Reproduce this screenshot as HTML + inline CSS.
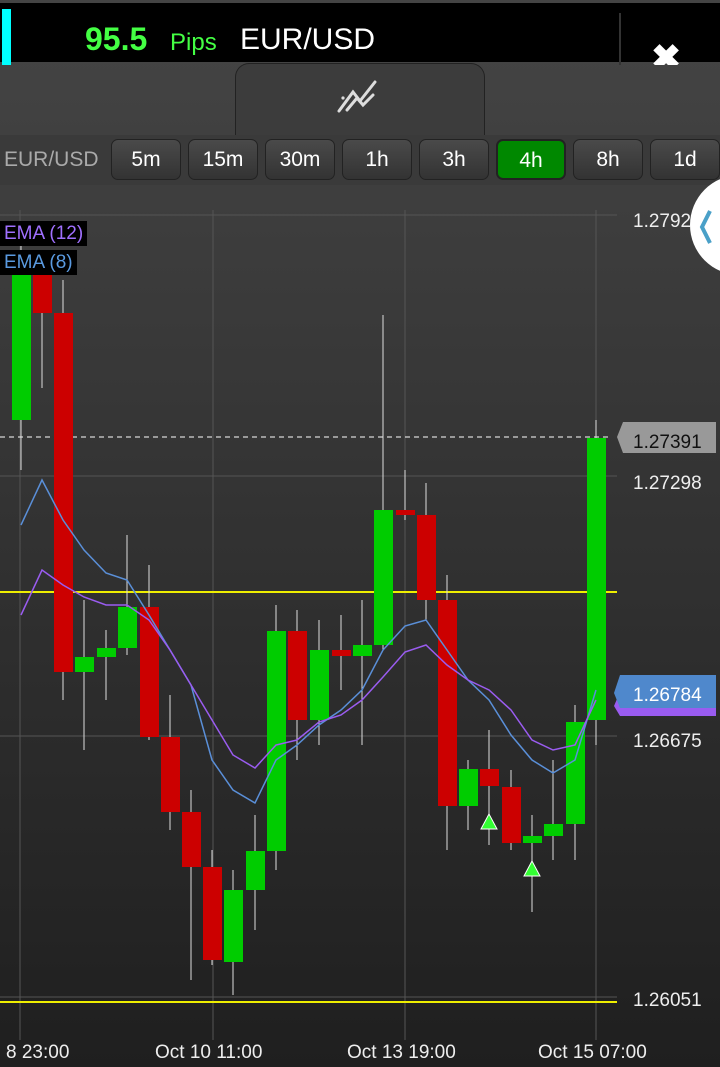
<!DOCTYPE html>
<html><head><meta charset="utf-8"><style>
body{margin:0;width:720px;height:1067px;overflow:hidden;background:linear-gradient(#454545,#1f1f1f);font-family:"Liberation Sans",sans-serif;position:relative}
.top{position:absolute;left:0;top:0;width:720px;height:62px;background:#000;border-top:3px solid #444;box-sizing:border-box}
.cy{position:absolute;left:2px;top:6px;width:9px;height:56px;background:#0ff}
.t1{position:absolute;left:85px;top:18px;font-size:32px;color:#4f4;font-weight:bold}
.t2{position:absolute;left:170px;top:26px;font-size:24px;color:#4f4}
.t3{position:absolute;left:240px;top:20px;font-size:30px;color:#fff}
.sep{position:absolute;left:619px;top:10px;width:2px;height:52px;background:#333}
.x{position:absolute;left:651px;top:34px;font-size:36px;color:#fff;font-weight:bold;height:28px;overflow:hidden}
.tab{position:absolute;left:235px;top:63px;width:250px;height:72px;background:#3c3c3c;border:1px solid #222;border-bottom:none;border-radius:14px 14px 0 0;box-sizing:border-box}
.row{position:absolute;left:0;top:135px;width:720px;height:50px;background:#3a3a3a}
.lbl{position:absolute;left:4px;top:148px;font-size:21px;color:#aaa}
.b{position:absolute;top:139px;width:70px;height:41px;background:linear-gradient(#4a4a4a,#333);border:1px solid #222;border-radius:7px;box-sizing:border-box;color:#fff;font-size:21px;text-align:center;line-height:40px}
.b.on{background:#080;border:2px solid #222}
.ema{position:absolute;left:0;background:#000;font-size:19px;padding:0 4px;height:25px;line-height:25px}
.circ{position:absolute;left:690px;top:175px;width:100px;height:100px;border-radius:50%;background:#fff}
</style></head><body>
<div class="top"><div class="cy"></div><div class="t1">95.5</div><div class="t2">Pips</div><div class="t3">EUR/USD</div><div class="sep"></div><div class="x">✖</div></div>
<div class="row"></div>
<div class="tab"><svg width="250" height="72" style="position:absolute;left:-1px;top:0"><path d="M104 47 L118 28 L125 37 L140 18 M112 46 L122 34 L128 41 L138 31" stroke="#ddd" stroke-width="3" fill="none" stroke-linecap="round"/><circle cx="108" cy="34" r="1.6" fill="#ddd"/></svg></div>
<div class="lbl">EUR/USD</div>
<div class="b" style="left:111px">5m</div><div class="b" style="left:188px">15m</div><div class="b" style="left:265px">30m</div><div class="b" style="left:342px">1h</div><div class="b" style="left:419px">3h</div><div class="b on" style="left:496px">4h</div><div class="b" style="left:573px">8h</div><div class="b" style="left:650px">1d</div>
<svg width="720" height="1067" style="position:absolute;left:0;top:0" font-family="Liberation Sans" >
<g stroke="#555" stroke-width="1"><line x1="0" y1="215" x2="617" y2="215"/><line x1="0" y1="476" x2="617" y2="476"/><line x1="0" y1="736" x2="617" y2="736"/><line x1="0" y1="997" x2="617" y2="997"/>
<line x1="20" y1="210" x2="20" y2="1040"/><line x1="213" y1="210" x2="213" y2="1040"/><line x1="405" y1="210" x2="405" y2="1040"/><line x1="596" y1="210" x2="596" y2="1040"/></g>
<line x1="0" y1="437" x2="612" y2="437" stroke="#fff" stroke-dasharray="5,4"/>
<line x1="0" y1="592" x2="617" y2="592" stroke="#ee0" stroke-width="2"/>
<line x1="0" y1="1002" x2="617" y2="1002" stroke="#ee0" stroke-width="2"/>
<g stroke="#ddd" stroke-width="1">
<line x1="21" y1="240" x2="21" y2="470"/><line x1="42" y1="260" x2="42" y2="388"/><line x1="63" y1="280" x2="63" y2="700"/><line x1="84" y1="600" x2="84" y2="750"/><line x1="106" y1="630" x2="106" y2="700"/><line x1="127" y1="535" x2="127" y2="655"/><line x1="149" y1="565" x2="149" y2="740"/><line x1="170" y1="695" x2="170" y2="830"/><line x1="191" y1="790" x2="191" y2="980"/><line x1="212" y1="850" x2="212" y2="965"/><line x1="233" y1="870" x2="233" y2="995"/><line x1="255" y1="815" x2="255" y2="930"/><line x1="276" y1="605" x2="276" y2="870"/><line x1="297" y1="610" x2="297" y2="760"/><line x1="319" y1="620" x2="319" y2="745"/><line x1="341" y1="615" x2="341" y2="690"/><line x1="362" y1="600" x2="362" y2="745"/><line x1="383" y1="315" x2="383" y2="650"/><line x1="405" y1="470" x2="405" y2="520"/><line x1="426" y1="483" x2="426" y2="620"/><line x1="447" y1="575" x2="447" y2="850"/><line x1="468" y1="760" x2="468" y2="830"/><line x1="489" y1="730" x2="489" y2="845"/><line x1="511" y1="770" x2="511" y2="850"/><line x1="532" y1="815" x2="532" y2="912"/><line x1="553" y1="760" x2="553" y2="860"/><line x1="575" y1="705" x2="575" y2="860"/><line x1="596" y1="420" x2="596" y2="745"/></g>
<g fill="#0c0"><rect x="12" y="250" width="19" height="170"/><rect x="75" y="657" width="19" height="15"/><rect x="97" y="648" width="19" height="9"/><rect x="118" y="607" width="19" height="41"/><rect x="224" y="890" width="19" height="72"/><rect x="246" y="851" width="19" height="39"/><rect x="267" y="631" width="19" height="220"/><rect x="310" y="650" width="19" height="70"/><rect x="353" y="645" width="19" height="11"/><rect x="374" y="510" width="19" height="135"/><rect x="459" y="769" width="19" height="37"/><rect x="523" y="836" width="19" height="7"/><rect x="544" y="824" width="19" height="12"/><rect x="566" y="722" width="19" height="102"/><rect x="587" y="438" width="19" height="282"/></g>
<g fill="#c00"><rect x="33" y="250" width="19" height="63"/><rect x="54" y="313" width="19" height="359"/><rect x="140" y="607" width="19" height="130"/><rect x="161" y="737" width="19" height="75"/><rect x="182" y="812" width="19" height="55"/><rect x="203" y="867" width="19" height="93"/><rect x="288" y="631" width="19" height="89"/><rect x="332" y="650" width="19" height="6"/><rect x="396" y="510" width="19" height="5"/><rect x="417" y="515" width="19" height="85"/><rect x="438" y="600" width="19" height="206"/><rect x="480" y="769" width="19" height="17"/><rect x="502" y="787" width="19" height="56"/></g>
<polygon points="489,814 481,829 497,829" fill="#3f3" stroke="#fff"/><polygon points="532,861 524,876 540,876" fill="#3f3" stroke="#fff"/>
<polyline fill="none" stroke="#5a8fd8" stroke-width="1.5" points="21,525 42,480 63,520 84,550 106,573 127,580 149,615 170,650 191,685 212,760 233,790 255,803 276,760 297,745 319,725 341,710 362,690 383,650 405,626 426,620 447,650 468,680 489,700 511,735 532,760 553,773 575,760 596,690"/>
<polyline fill="none" stroke="#9a5cf0" stroke-width="1.5" points="21,615 42,570 63,585 84,597 106,605 127,605 149,620 170,650 191,685 212,720 233,755 255,768 276,745 297,740 319,722 341,715 362,700 383,677 405,652 426,645 447,665 468,680 489,690 511,710 532,740 553,750 575,745 596,700"/>
<polygon points="617,437 623,422 716,422 716,453 623,453" fill="#999"/>
<polygon points="614,706 620,692 716,692 716,716 620,716" fill="#9a5cf0"/>
<polygon points="614,693 620,675 716,675 716,708 620,708" fill="#4f88cc"/>
<g font-size="19" fill="#eee"><text x="633" y="227">1.27925</text><text x="633" y="489">1.27298</text><text x="633" y="747">1.26675</text><text x="633" y="1006">1.26051</text><text x="633" y="448" fill="#111">1.27391</text><text x="633" y="701" fill="#fff">1.26784</text>
<text x="6" y="1058">8 23:00</text><text x="155" y="1058">Oct 10 11:00</text><text x="347" y="1058">Oct 13 19:00</text><text x="538" y="1058">Oct 15 07:00</text></g>
</svg>
<div class="circ"></div>
<svg width="20" height="40" style="position:absolute;left:698px;top:207px"><path d="M12 4 L4 20 L12 36" stroke="#4aa0c8" stroke-width="4" fill="none"/></svg>
<div class="ema" style="top:221px;color:#a070ff">EMA (12)</div>
<div class="ema" style="top:250px;color:#5a9ae0">EMA (8)</div>
</body></html>
